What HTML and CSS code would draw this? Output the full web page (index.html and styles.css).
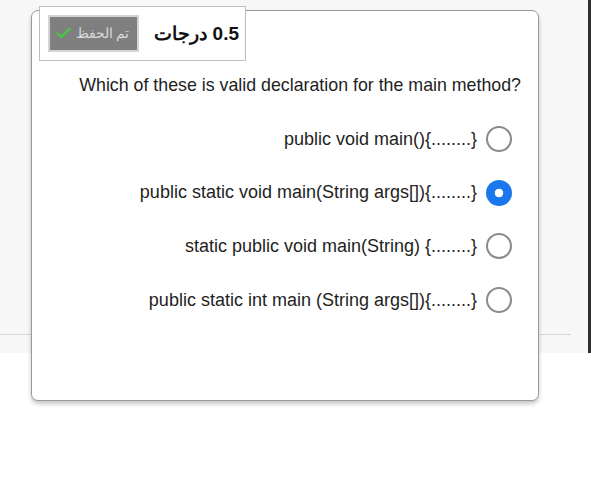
FILE: index.html
```html
<!DOCTYPE html>
<html lang="ar">
<head>
<meta charset="utf-8">
<title>Question</title>
<link rel="stylesheet" href="styles.css">
</head>
<body>
<div class="card">
  <div class="info" dir="rtl">
    <div class="grade">0.5 درجات</div>
    <div class="saved">
      <span class="saved-text">تم الحفظ</span>
      <svg class="check" width="15" height="12" viewBox="0 0 15 12"><path d="M1.5 6.5 L5.5 10 L13.5 1.8" fill="none" stroke="#4cc04c" stroke-width="2.6" stroke-linecap="round" stroke-linejoin="round"/></svg>
    </div>
  </div>
  <p class="question">Which of these is valid declaration for the main method?</p>
  <ul class="options">
    <li class="option"><span class="label">public void main(){........}</span><span class="radio"></span></li>
    <li class="option"><span class="label">public static void main(String args[]){........}</span><span class="radio checked"></span></li>
    <li class="option"><span class="label">static public void main(String) {........}</span><span class="radio"></span></li>
    <li class="option"><span class="label">public static int main (String args[]){........}</span><span class="radio"></span></li>
  </ul>
</div>
</body>
</html>
```
FILE: styles.css
```css
html, body {
  margin: 0;
  padding: 0;
}
body {
  width: 591px;
  height: 482px;
  overflow: hidden;
  font-family: "Liberation Sans", Arial, sans-serif;
  color: #1e1e1e;
  background-color: #ffffff;
  background-image:
    linear-gradient(#2e2e2e, #2e2e2e),
    linear-gradient(#d6d6d6, #d6d6d6),
    linear-gradient(#f7f7f7, #f7f7f7);
  background-repeat: no-repeat;
  background-size: 3px 353px, 571px 1px, 100% 353px;
  background-position: 588px 0, 0 334px, 0 0;
  padding-top: 10px;
  box-sizing: border-box;
}
.card {
  margin-left: 31px;
  width: 508px;
  height: 391px;
  box-sizing: border-box;
  background: #ffffff;
  border: 1px solid #9a9a9a;
  border-radius: 7px;
  box-shadow: 0 3px 4px rgba(0, 0, 0, 0.22);
}
.info {
  margin: -5px 0 0 7px;
  width: 207px;
  height: 55px;
  box-sizing: border-box;
  background: #ffffff;
  border: 1px solid #bdbdbd;
  display: flex;
  align-items: center;
  justify-content: space-between;
  padding: 0 6px 0 8px;
}
.grade {
  font-weight: bold;
  font-size: 19px;
  color: #111;
}
.saved {
  width: 91px;
  height: 37px;
  box-sizing: border-box;
  background: #7f7f7f;
  border: 2px solid #d4d4d4;
  display: flex;
  align-items: center;
  justify-content: center;
  gap: 5px;
  padding: 0 2px 2px 0;
}
.saved-text {
  font-size: 14px;
  color: #d9d9d9;
}
.check {
  display: block;
}
.question {
  margin: 14px 17px 0 0;
  text-align: right;
  font-size: 17.8px;
  line-height: 21px;
}
.options {
  list-style: none;
  margin: 30px 26px 0 0;
  padding: 0;
}
.option {
  display: flex;
  justify-content: flex-end;
  align-items: center;
  gap: 9px;
  height: 26px;
  margin-bottom: 27.7px;
  font-size: 18px;
}
.radio {
  width: 26px;
  height: 26px;
  box-sizing: border-box;
  border-radius: 50%;
  border: 2px solid #8a8a8a;
  background: #fff;
  flex: none;
}
.radio.checked {
  border: none;
  background: radial-gradient(circle, #ffffff 4px, #1a78ec 4.6px);
}
```
